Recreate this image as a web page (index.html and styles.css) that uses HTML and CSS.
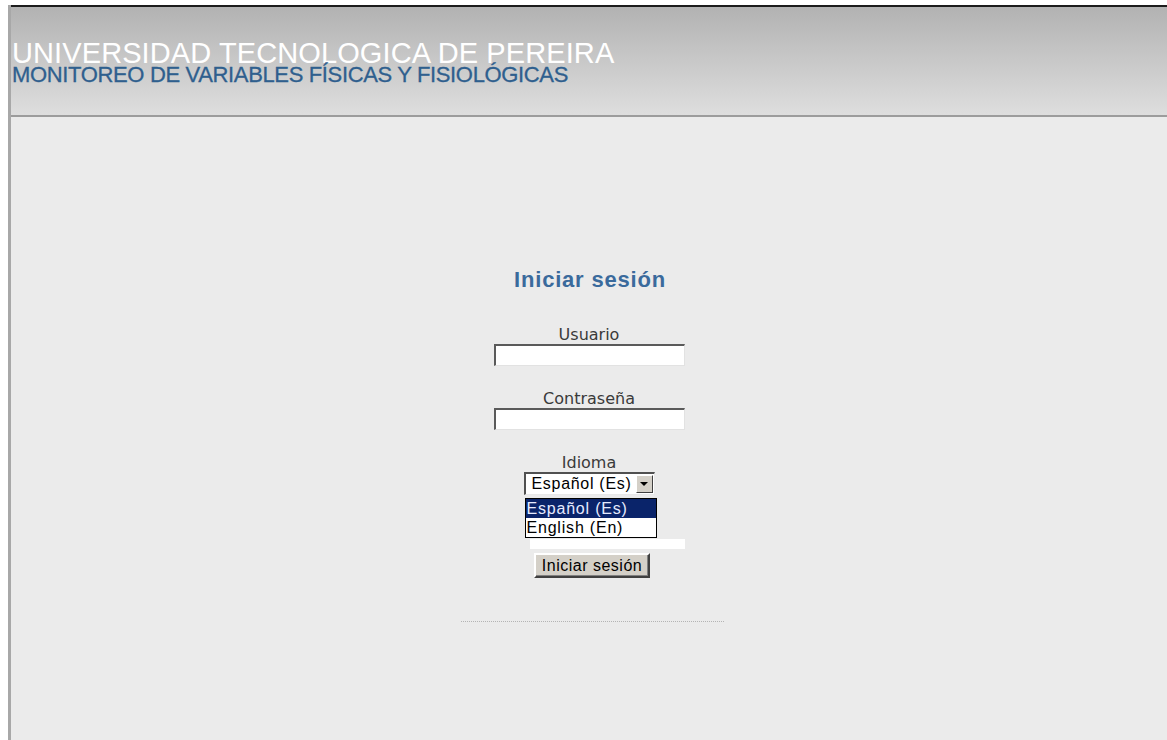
FILE: index.html
```html
<!DOCTYPE html>
<html lang="es">
<head>
<meta charset="utf-8">
<title>Monitoreo de variables físicas y fisiológicas</title>
<link rel="stylesheet" href="styles.css">
</head>
<body>
<div class="page">
  <header class="header">
    <div class="header-title">UNIVERSIDAD TECNOLOGICA DE PEREIRA</div>
    <div class="header-subtitle">MONITOREO DE VARIABLES FÍSICAS Y FISIOLÓGICAS</div>
  </header>

  <main class="main">
    <form class="login">
      <h1 class="login-title">Iniciar sesión</h1>

      <label class="field-label" for="usuario">Usuario</label>
      <input class="field-input" id="usuario" type="text">

      <label class="field-label gap" for="clave">Contraseña</label>
      <input class="field-input" id="clave" type="password">

      <span class="field-label gap">Idioma</span>
      <div class="combo">
        <div class="combo-box">
          <span class="combo-value">Español (Es)</span>
          <span class="combo-button"><span class="combo-arrow"></span></span>
        </div>
        <ul class="combo-list">
          <li class="combo-option selected">Español (Es)</li>
          <li class="combo-option">English (En)</li>
        </ul>
      </div>

      <div class="spacer-strip"></div>

      <button class="submit" type="button">Iniciar sesión</button>

      <div class="separator"></div>
    </form>
  </main>
</div>
</body>
</html>
```

FILE: styles.css
```css
html, body {
  margin: 0;
  padding: 0;
}

body {
  background: #ffffff;
  padding: 5px 0 0 8px;
  height: 740px;
  box-sizing: border-box;
  overflow: hidden;
  font-family: "Liberation Sans", Arial, sans-serif;
}

.page {
  height: 100%;
  border-left: 3px solid #a8a8a8;
  background: #ebebeb;
  display: flex;
  flex-direction: column;
}

/* top banner */
.header {
  flex: none;
  height: 112px;
  box-sizing: border-box;
  border-top: 2px solid #1c1c1c;
  border-bottom: 2px solid #9c9c9c;
  background: linear-gradient(to bottom, #b2b2b2 0%, #c6c6c6 45%, #dedede 100%);
  padding: 34px 0 0 1px;
}

.header-title {
  color: #ffffff;
  font-size: 29px;
  line-height: 24px;
  letter-spacing: 0.1px;
  white-space: nowrap;
}

.header-subtitle {
  margin-top: 1px;
  color: #2f5f8e;
  font-size: 22px;
  line-height: 18px;
  letter-spacing: -0.35px;
  -webkit-text-stroke: 0.3px #2f5f8e;
  white-space: nowrap;
}

/* login column */
.main {
  flex: 1;
  padding-top: 150px;
}

.login {
  display: flex;
  flex-direction: column;
  align-items: center;
  margin: 0;
}

.login-title {
  margin: 0 0 33px 2px;
  font-size: 22px;
  line-height: 26px;
  font-weight: bold;
  letter-spacing: 0.8px;
  color: #3a6a9c;
}

.field-label {
  font-family: "DejaVu Sans", Verdana, sans-serif;
  font-size: 16px;
  line-height: 18px;
  color: #3a3a3a;
}

.field-label.gap {
  margin-top: 24px;
}

.field-input {
  width: 191px;
  height: 22px;
  box-sizing: border-box;
  margin: 0;
  padding: 0;
  background: #ffffff;
  border-style: solid;
  border-width: 2px 1px 1px 2px;
  border-color: #5a5a5a #e2e2e2 #e2e2e2 #5a5a5a;
  outline: none;
}

/* language combo, shown with its list open */
.combo {
  position: relative;
  width: 131px;
}

.combo-box {
  height: 23px;
  box-sizing: border-box;
  display: flex;
  align-items: stretch;
  background: #ffffff;
  border-style: solid;
  border-width: 2px 1px 1px 2px;
  border-color: #505050 #e8e8e8 #e8e8e8 #505050;
  padding: 1px 1px 1px 0;
}

.combo-value {
  flex: 1;
  padding-left: 6px;
  font-size: 16px;
  letter-spacing: 0.7px;
  line-height: 18px;
  color: #000000;
  white-space: nowrap;
  overflow: hidden;
}

.combo-button {
  width: 17px;
  background: #d4d0c8;
  border-style: solid;
  border-width: 1px;
  border-color: #ffffff #404040 #404040 #ffffff;
  box-sizing: border-box;
  display: flex;
  align-items: center;
  justify-content: center;
}

.combo-arrow {
  width: 0;
  height: 0;
  border-left: 4px solid transparent;
  border-right: 4px solid transparent;
  border-top: 4px solid #000000;
}

.combo-list {
  position: absolute;
  top: 26px;
  left: 1px;
  width: 132px;
  margin: 0;
  padding: 0;
  list-style: none;
  background: #ffffff;
  border: 1px solid #000000;
  box-sizing: border-box;
  z-index: 2;
}

.combo-option {
  height: 19px;
  line-height: 19px;
  padding-left: 1px;
  font-size: 16px;
  letter-spacing: 0.8px;
  color: #000000;
  white-space: nowrap;
}

.combo-option.selected {
  background: #0a246a;
  color: #e6ebff;
}

.spacer-strip {
  width: 155px;
  height: 10px;
  margin: 44px 0 0 36px;
  background: #ffffff;
}

.submit {
  margin: 4px 0 0 6px;
  width: 116px;
  height: 25px;
  padding: 0;
  background: #d4d0c8;
  border-style: solid;
  border-width: 2px;
  border-color: #ffffff #404040 #404040 #ffffff;
  box-shadow: inset -1px -1px 0 #808080;
  font-family: "Liberation Sans", Arial, sans-serif;
  font-size: 16px;
  letter-spacing: 0.5px;
  color: #000000;
}

.separator {
  width: 263px;
  margin: 43px 0 0 7px;
  border-top: 1px dotted #b4b4b4;
}
```
